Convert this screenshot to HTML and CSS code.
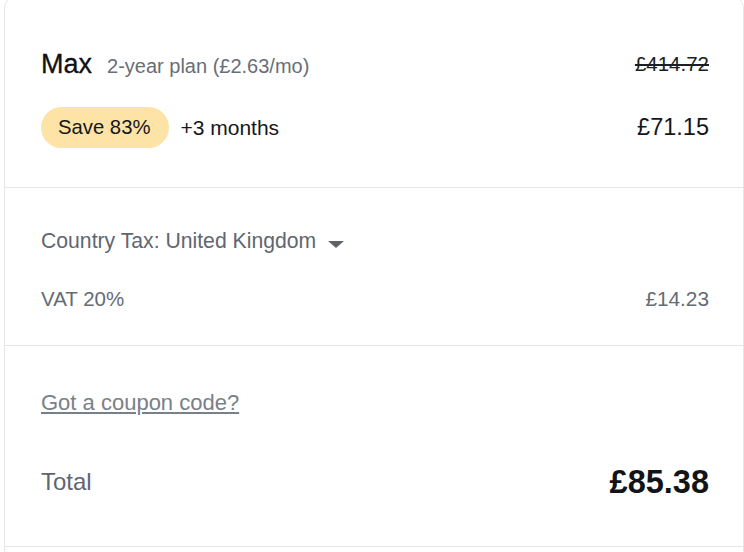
FILE: index.html
```html
<!DOCTYPE html>
<html lang="en">
<head>
<meta charset="utf-8">
<title>Order summary</title>
<link rel="stylesheet" href="styles.css">
</head>
<body>
<div class="card">
  <section class="sec sec-plan">
    <div class="row row-head">
      <div class="plan-name"><span class="plan-title">Max</span><span class="plan-sub">2-year plan (£2.63/mo)</span></div>
      <span class="old-price">£414.72</span>
    </div>
    <div class="row">
      <div class="plan-extra"><span class="badge">Save 83%</span><span class="bonus">+3 months</span></div>
      <span class="price">£71.15</span>
    </div>
  </section>
  <section class="sec sec-tax">
    <div class="row row-line">
      <div class="tax-select">Country Tax: United Kingdom<span class="caret"></span></div>
    </div>
    <div class="row row-line">
      <span class="muted">VAT 20%</span>
      <span class="muted amount">£14.23</span>
    </div>
  </section>
  <section class="sec sec-total">
    <div class="row row-line">
      <a class="coupon" href="#">Got a coupon code?</a>
    </div>
    <div class="row row-total">
      <span class="total-label">Total</span>
      <span class="total-price">£85.38</span>
    </div>
  </section>
  <section class="sec sec-tail"></section>
</div>
</body>
</html>
```
FILE: styles.css
```css
html, body {
  margin: 0;
  padding: 0;
  background: #ffffff;
}
body {
  font-family: "Liberation Sans", Arial, Helvetica, sans-serif;
  color: #121417;
  overflow: hidden;
  height: 552px;
}
.card {
  margin: -4px 0 0 4px;
  width: 740px;
  box-sizing: border-box;
  border: 1px solid #e6e6e6;
  border-radius: 12px 12px 0 0;
  min-height: 600px;
}
.sec {
  padding: 0 34px 0 36px;
  border-bottom: 1px solid #e6e6e6;
  display: flex;
  flex-direction: column;
}
.row {
  display: flex;
  justify-content: space-between;
  align-items: center;
}
.sec-plan {
  padding-top: 51px;
  padding-bottom: 39px;
  gap: 27px;
}
.row-head { height: 32px; }
.plan-name {
  display: flex;
  align-items: baseline;
  gap: 15px;
}
.plan-title {
  font-size: 27px;
  color: #0f1114;
  -webkit-text-stroke: 0.3px #0f1114;
}
.plan-sub {
  font-size: 20px;
  color: #686e76;
}
.old-price {
  font-size: 20.5px;
  text-decoration: line-through;
  text-decoration-thickness: 2px;
  color: #1b1e22;
}
.plan-extra {
  display: flex;
  align-items: center;
  gap: 11px;
}
.badge {
  display: inline-flex;
  align-items: center;
  height: 41px;
  padding: 0 19px 0 17px;
  border-radius: 21px;
  background: #fde3a6;
  font-size: 20.3px;
  color: #15171a;
}
.bonus {
  font-size: 21px;
  color: #15171a;
}
.price {
  font-size: 23.5px;
  color: #15171a;
}
.sec-tax {
  padding-top: 39px;
  padding-bottom: 32px;
  gap: 30px;
}
.row-line { height: 28px; }
.tax-select {
  font-size: 21.2px;
  color: #5f6670;
  display: flex;
  align-items: center;
}
.caret {
  display: inline-block;
  width: 0;
  height: 0;
  margin-left: 12px;
  margin-top: 6px;
  border-left: 8px solid transparent;
  border-right: 8px solid transparent;
  border-top: 7px solid #5f6368;
}
.muted {
  font-size: 20.5px;
  color: #646b74;
}
.amount { font-size: 20.8px; }
.sec-total {
  padding-top: 43px;
  padding-bottom: 44px;
  gap: 45px;
}
.row-total { height: 40px; }
.coupon {
  font-size: 22px;
  color: #7a8088;
  text-decoration: underline;
  text-decoration-thickness: 1.5px;
  text-underline-offset: 2px;
}
.total-label {
  font-size: 24px;
  color: #5f6670;
}
.total-price {
  font-size: 32.5px;
  font-weight: 700;
  color: #121417;
}
.sec-tail {
  border-bottom: none;
  height: 40px;
}
```
